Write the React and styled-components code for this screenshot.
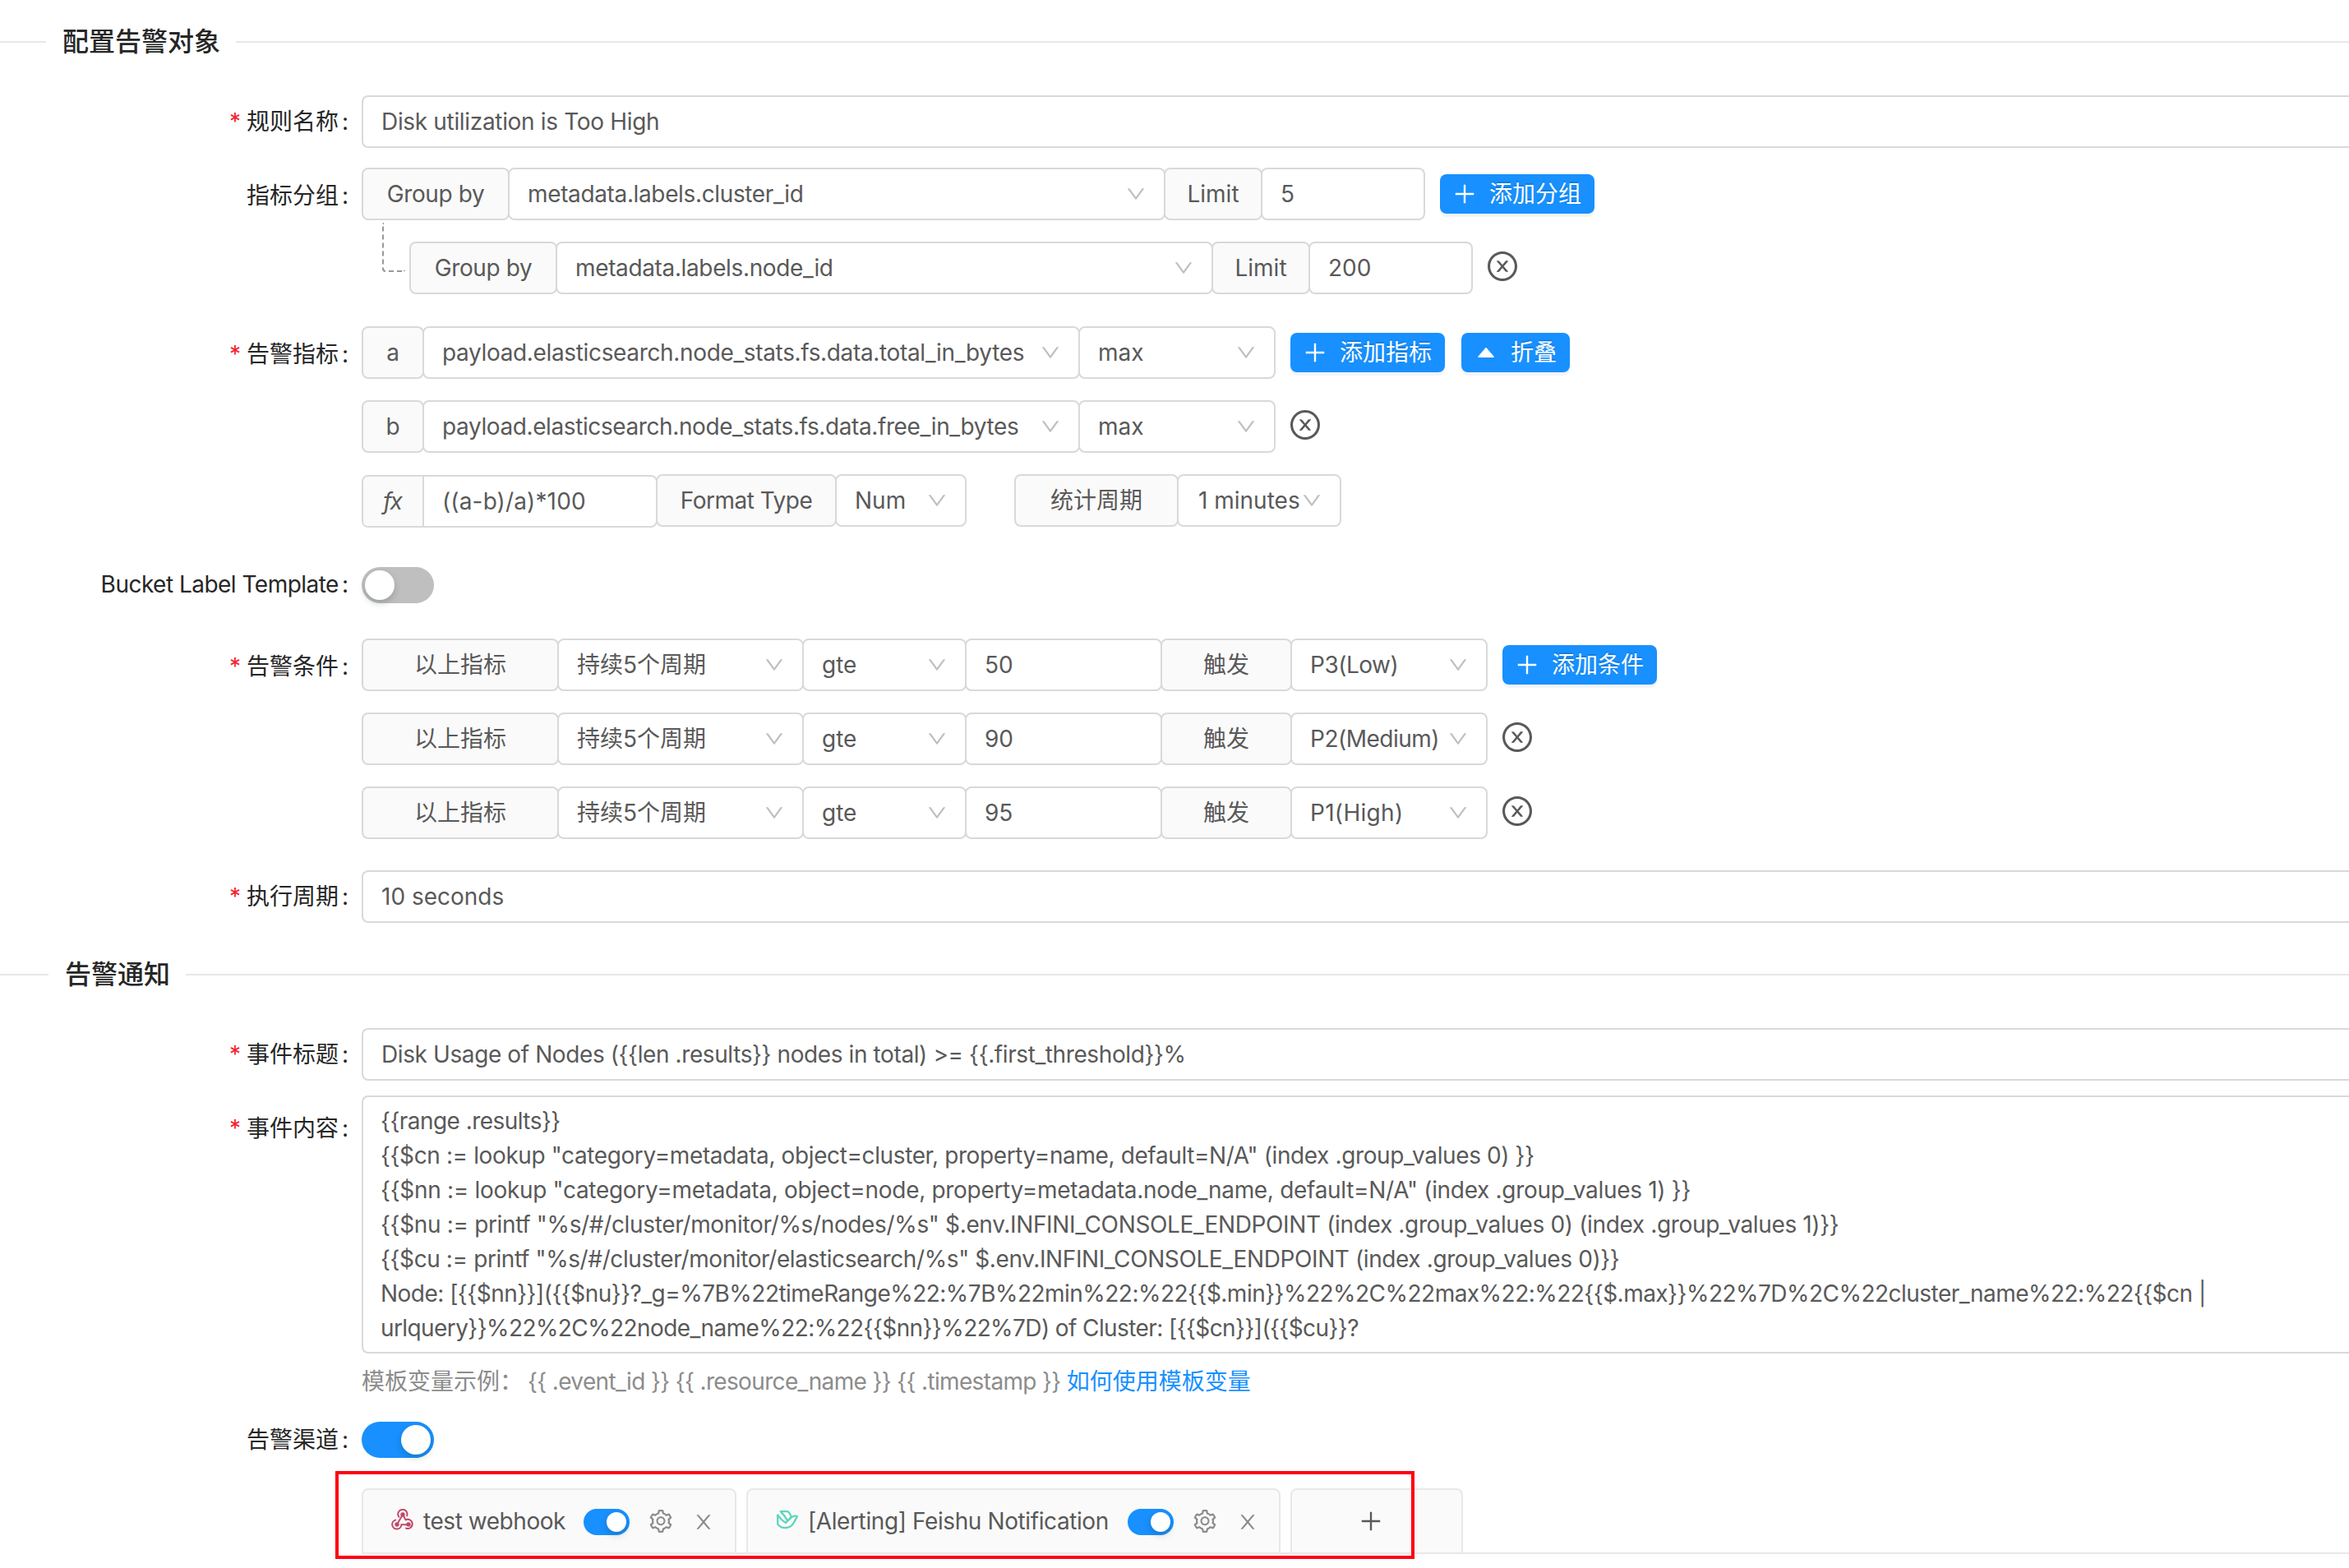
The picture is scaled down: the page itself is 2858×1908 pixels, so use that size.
import React from "react";
import styled, { createGlobalStyle, css } from "styled-components";
import { AiOutlineSetting } from "react-icons/ai";

const GlobalStyle = createGlobalStyle`
  *, *::before, *::after { box-sizing: border-box; }
  body { margin: 0; background: #fff; overflow: hidden; }
`;

const Page = styled.main`
  width: 2858px;
  height: 1908px;
  padding-top: 27px;
  overflow: hidden;
  background: #fff;
  color: #595959;
  font-family: Inter, "Noto Sans CJK SC", sans-serif;
  font-size: 28px;
  line-height: 42px;
  white-space: nowrap;
`;

const Heading = styled.h2`
  display: flex;
  align-items: center;
  height: 48px;
  margin: ${(p) => p.$mt || 0}px 0 0;
  color: #262626;
  font-size: 32px;
  font-weight: 500;
  line-height: 48px;

  &::before,
  &::after {
    content: "";
    height: 2px;
    background: #e8e8e8;
  }
  &::before { width: ${(p) => p.$lead}px; margin-right: 20px; }
  &::after { flex: 1; margin-left: 19px; }
`;

const FormItem = styled.section`
  display: grid;
  grid-template-columns: 440px 1fr;
  margin-top: ${(p) => p.$mt}px;
`;

const Label = styled.label`
  display: flex;
  justify-content: flex-end;
  align-items: center;
  height: ${(p) => p.$h || 64}px;
  margin-top: ${(p) => p.$shift || 0}px;
  padding-right: 16px;
  color: #262626;
  letter-spacing: ${(p) => p.$ls || 0}px;

  &::after { content: ":"; margin-left: 4px; letter-spacing: 0; }
`;

const Required = styled.span`
  margin-right: 7px;
  color: #f5222d;
`;

const Stack = styled.div`
  display: flex;
  flex-direction: column;
  gap: 26px;
`;

const Row = styled.div`
  display: flex;
  align-items: center;
  height: 64px;
  margin-left: ${(p) => p.$indent || 0}px;
  position: relative;
`;

const Branch = styled.span`
  position: absolute;
  left: -33px;
  top: -23px;
  width: 28px;
  height: 60px;
  border-left: 2px dashed #999;
  border-bottom: 2px dashed #999;
  border-bottom-left-radius: 4px;
`;

const cell = css`
  display: flex;
  align-items: center;
  width: ${(p) => p.$w}px;
  height: 64px;
  border: 2px solid #d9d9d9;
  border-radius: 8px;
  letter-spacing: ${(p) => p.$ls || 0}px;
`;

const Addon = styled.span`
  ${cell}
  flex: none;
  justify-content: center;
  background: #fafafa;
  margin-left: ${(p) => p.$ml || 0}px;
`;

const Input = styled.div`
  ${cell}
  flex: none;
  padding: 0 22px;
  background: #fff;
  margin-left: ${(p) => p.$ml || 0}px;
`;

const WideInput = styled.div`
  ${cell}
  width: auto;
  padding: 0 22px;
  border-right: 0;
  border-radius: 8px 0 0 8px;
`;

const SelectBox = styled(Input)`
  justify-content: space-between;
  padding-left: ${(p) => p.$pl || 22}px;
`;

const FormulaGroup = styled.div`
  display: flex;
  flex: none;
  width: 360px;
  height: 64px;
  margin-top: 2px;
  border: 2px solid #d9d9d9;
  border-radius: 8px;
  overflow: hidden;
  line-height: 60px;
`;

const FormulaMark = styled.i`
  width: 74px;
  padding-right: 2px;
  border-right: 2px solid #d9d9d9;
  background: #fafafa;
  text-align: center;
  letter-spacing: -2px;
`;

const FormulaText = styled.span`
  padding-left: 22px;
  letter-spacing: 0.15px;
`;

const Button = styled.button`
  display: flex;
  align-items: center;
  gap: 16px;
  flex: none;
  height: 48px;
  margin: 0 0 0 ${(p) => p.$ml || 18}px;
  padding: 0 16px;
  border: 0;
  border-radius: 8px;
  background: #1890ff;
  box-shadow: 0 4px 0 rgba(0, 0, 0, 0.045);
  color: #fff;
  font: inherit;
  text-shadow: 0 -2px 0 rgba(0, 0, 0, 0.12);
`;

const IconSvg = styled.svg`
  display: block;
  flex: none;
  width: ${(p) => p.$size}px;
  height: ${(p) => p.$size}px;
  fill: currentColor;
  color: ${(p) => p.$color || "inherit"};
`;

const RemoveButton = styled.span`
  margin: -4px 0 0 18px;
  color: #595959;
`;

const SwitchTrack = styled.span`
  display: flex;
  flex: none;
  align-items: center;
  justify-content: ${(p) => (p.$on ? "flex-end" : "flex-start")};
  width: ${(p) => (p.$small ? 56 : 88)}px;
  height: ${(p) => (p.$small ? 32 : 44)}px;
  padding: 4px;
  border-radius: 22px;
  background: ${(p) => (p.$on ? "#1890ff" : "#bfbfbf")};

  &::after {
    content: "";
    width: ${(p) => (p.$small ? 24 : 36)}px;
    height: ${(p) => (p.$small ? 24 : 36)}px;
    border-radius: 50%;
    background: #fff;
    box-shadow: 0 4px 8px rgba(0, 35, 11, 0.2);
  }
`;

const TextArea = styled.div`
  height: 314px;
  padding: 8px 22px 8px 21px;
  border: 2px solid #d9d9d9;
  border-right: 0;
  border-radius: 8px 0 0 8px;
`;

const Line = styled.div`
  height: 42px;
  letter-spacing: ${(p) => p.$ls || 0}px;
`;

const Hint = styled.div`
  display: flex;
  margin: 13px 0 0 440px;
  color: #8c8c8c;
`;

const HintSample = styled.span`
  margin-left: 6px;
  letter-spacing: -0.65px;
`;

const HintLink = styled.a`
  margin-left: 7px;
  color: #1890ff;
`;

const TabBar = styled.nav`
  position: relative;
  display: flex;
  gap: 12px;
  height: 80px;
  margin: 37px 0 0 440px;
  border-bottom: 2px solid #e8e8e8;
`;

const Tab = styled.div`
  display: flex;
  align-items: center;
  width: ${(p) => p.$w}px;
  height: 78px;
  padding: 0 0 0 ${(p) => p.$pl}px;
  border: 2px solid #e8e8e8;
  border-bottom: 0;
  border-radius: 8px 8px 0 0;
  background: #fafafa;
`;

const TabName = styled.span`
  width: ${(p) => p.$w}px;
  margin: 0 0 0 11px;
  letter-spacing: ${(p) => p.$ls || 0}px;
`;

const TabTools = styled.span`
  display: flex;
  align-items: center;
  gap: 24px;
  margin-top: 2px;
  color: #8c8c8c;
`;

const TabGear = styled(AiOutlineSetting)`
  margin: -2px 2px 0 0;
`;

const Highlight = styled.div`
  position: absolute;
  left: -32px;
  top: -21px;
  width: 1313px;
  height: 107px;
  border: 4px solid #ff0014;
`;

const ChannelIcon = styled.svg`
  flex: none;
  display: block;
  width: 28px;
  height: 26px;
  margin-top: -4px;
  fill: none;
`;

const Down = () => (
  <IconSvg $size={24} $color="#bfbfbf" viewBox="64 64 896 896">
    <path d="M884 256h-75c-5.1 0-9.9 2.5-12.9 6.6L512 654.2 227.9 262.6c-3-4.1-7.8-6.6-12.9-6.6h-75c-6.5 0-10.3 7.4-6.5 12.7l352.6 486.1c12.8 17.6 39 17.6 51.7 0l352.6-486.1c3.9-5.3.1-12.7-6.4-12.7z" />
  </IconSvg>
);

const Plus = () => (
  <IconSvg $size={28} viewBox="64 64 896 896">
    <path d="M482 152h60q8 0 8 8v704q0 8-8 8h-60q-8 0-8-8V160q0-8 8-8z" />
    <path d="M160 474h704q8 0 8 8v60q0 8-8 8H160q-8 0-8-8v-60q0-8 8-8z" />
  </IconSvg>
);

const CaretUp = () => (
  <IconSvg $size={28} viewBox="0 0 28 28">
    <path d="M13.2 8.5q.8-.9 1.6 0l8.8 10.2q.9 1.3-.7 1.3H5.1q-1.6 0-.7-1.3z" />
  </IconSvg>
);

const Close = () => (
  <IconSvg $size={24} viewBox="64 64 896 896">
    <path d="M563.8 512l262.5-312.9c4.4-5.2.7-13.1-6.1-13.1h-79.8c-4.7 0-9.2 2.1-12.3 5.7L511.6 449.8 295.1 191.7c-3-3.6-7.5-5.7-12.3-5.7H203c-6.8 0-10.5 7.9-6.1 13.1L459.4 512 196.9 824.9A7.95 7.95 0 0 0 203 838h79.8c4.7 0 9.2-2.1 12.3-5.7l216.5-258.1 216.5 258.1c3 3.6 7.5 5.7 12.3 5.7h79.8c6.8 0 10.5-7.9 6.1-13.1L563.8 512z" />
  </IconSvg>
);

const Remove = () => (
  <RemoveButton>
    <IconSvg $size={36} viewBox="64 64 896 896">
      <path d="M685.4 354.8c0-4.4-3.6-8-8-8l-66 .3L512 465.6l-99.3-118.4-66.1-.3c-4.4 0-8 3.5-8 8 0 1.9.7 3.7 1.9 5.2l130.1 155L340.5 670a8.32 8.32 0 0 0-1.9 5.2c0 4.4 3.6 8 8 8l66.1-.3L512 564.4l99.3 118.4 66 .3c4.4 0 8-3.5 8-8 0-1.9-.7-3.7-1.9-5.2L553.5 515l130.1-155c1.2-1.4 1.8-3.3 1.8-5.2z" />
      <path d="M512 65C264.6 65 64 265.6 64 513s200.6 448 448 448 448-200.6 448-448S759.4 65 512 65zm0 820c-205.4 0-372-166.6-372-372s166.6-372 372-372 372 166.6 372 372-166.6 372-372 372z" />
    </IconSvg>
  </RemoveButton>
);

const Webhook = () => (
  <ChannelIcon viewBox="0 0 28 26">
    <g stroke="#bf4a6b" strokeWidth="2" strokeLinecap="round">
      <path d="M9.2 9.6a5.6 5.6 0 1 1 9.9-1.2" />
      <path d="M14 7 L10.2 13.4 L7 19" />
      <path d="M14 7 L17.6 13.4 A5.6 5.6 0 1 1 18 23.6" />
      <path d="M5.2 13.6 A5.6 5.6 0 1 0 12.4 19.2 H21" />
    </g>
    <g fill="#bf4a6b">
      <circle cx="14" cy="7" r="2.7" />
      <circle cx="7" cy="19" r="2.7" />
      <circle cx="21" cy="19" r="2.7" />
    </g>
  </ChannelIcon>
);

const Feishu = () => (
  <ChannelIcon viewBox="0 0 28 26">
    <g stroke="#5fd6bb" strokeWidth="2.3" strokeLinejoin="round">
      <path d="M5.6 3.2H14.4C17 5.4 18.4 8 18.4 10.6L14 14.6C12 10.4 9 6.4 5.6 3.2Z" />
      <path d="M2.2 7.4V18.6C5 22.4 9 23.6 13 23C17.4 22.4 20.4 20 22 16.4L26 9.2C23 8 20.4 8.8 18.4 10.6L12 17C8.4 15 5 11.4 2.2 7.4Z" />
    </g>
  </ChannelIcon>
);

const Select = ({ w, ls, pl, ml = -2, children }) => (
  <SelectBox $w={w} $ls={ls} $pl={pl} $ml={ml}>
    {children}
    <Down />
  </SelectBox>
);

const groups = [
  { field: "metadata.labels.cluster_id", limit: "5" },
  { field: "metadata.labels.node_id", limit: "200", nested: true },
];

const metrics = [
  { name: "a", field: "payload.elasticsearch.node_stats.fs.data.total_in_bytes", tracking: -0.35 },
  { name: "b", field: "payload.elasticsearch.node_stats.fs.data.free_in_bytes", tracking: -0.4 },
];

const conditions = [
  { value: "50", level: "P3(Low)", tracking: -0.5 },
  { value: "90", level: "P2(Medium)", tracking: -0.5 },
  { value: "95", level: "P1(High)", tracking: 0.3 },
];

const message = [
  { tracking: -0.55, text: "{{range .results}}" },
  { tracking: -0.39, text: '{{$cn := lookup "category=metadata, object=cluster, property=name, default=N/A" (index .group_values 0) }}' },
  { tracking: -0.31, text: '{{$nn := lookup "category=metadata, object=node, property=metadata.node_name, default=N/A" (index .group_values 1) }}' },
  { tracking: -0.35, text: '{{$nu := printf "%s/#/cluster/monitor/%s/nodes/%s" $.env.INFINI_CONSOLE_ENDPOINT (index .group_values 0) (index .group_values 1)}}' },
  { tracking: -0.4, text: '{{$cu := printf "%s/#/cluster/monitor/elasticsearch/%s" $.env.INFINI_CONSOLE_ENDPOINT (index .group_values 0)}}' },
  { tracking: -0.52, text: "Node: [{{$nn}}]({{$nu}}?_g=%7B%22timeRange%22:%7B%22min%22:%22{{$.min}}%22%2C%22max%22:%22{{$.max}}%22%7D%2C%22cluster_name%22:%22{{$cn |" },
  { tracking: -0.59, text: "urlquery}}%22%2C%22node_name%22:%22{{$nn}}%22%7D) of Cluster: [{{$cn}}]({{$cu}}?" },
];

const ReqLabel = ({ shift, children }) => (
  <Label $shift={shift}>
    <Required>*</Required>
    {children}
  </Label>
);

const ChannelTools = () => (
  <TabTools>
    <SwitchTrack $on $small />
    <TabGear size={28} viewBox="64 64 896 896" />
    <Close />
  </TabTools>
);

export default function App() {
  return (
    <>
      <GlobalStyle />
      <Page>
        <Heading $lead={56}>配置告警对象</Heading>

        <FormItem $mt={41}>
          <ReqLabel>规则名称</ReqLabel>
          <WideInput $ls={-0.33}>Disk utilization is Too High</WideInput>
        </FormItem>

        <FormItem $mt={24}>
          <Label $shift={2}>指标分组</Label>
          <Stack>
            {groups.map((g) => (
              <Row key={g.field} $indent={g.nested ? 58 : 0}>
                {g.nested && <Branch />}
                <Addon $w={180} $ls={-0.4}>Group by</Addon>
                <Select w={800} ls={-0.36}>{g.field}</Select>
                <Addon $w={120} $ml={-2}>Limit</Addon>
                <Input $w={200} $ml={-2}>{g.limit}</Input>
                {g.nested ? <Remove /> : <Button><Plus />添加分组</Button>}
              </Row>
            ))}
          </Stack>
        </FormItem>

        <FormItem $mt={39}>
          <ReqLabel shift={2}>告警指标</ReqLabel>
          <Stack>
            {metrics.map((m, i) => (
              <Row key={m.name}>
                <Addon $w={76}>{m.name}</Addon>
                <Select w={800} ls={m.tracking}>{m.field}</Select>
                <Select w={240}>max</Select>
                {i === 0 ? (
                  <>
                    <Button><Plus />添加指标</Button>
                    <Button $ml={20}><CaretUp />折叠</Button>
                  </>
                ) : (
                  <Remove />
                )}
              </Row>
            ))}
            <Row>
              <FormulaGroup>
                <FormulaMark>fx</FormulaMark>
                <FormulaText>((a-b)/a)*100</FormulaText>
              </FormulaGroup>
              <Addon $w={220} $ml={-2} $ls={-0.5}>Format Type</Addon>
              <Select w={160}>Num</Select>
              <Addon $w={200} $ml={58}>统计周期</Addon>
              <Select w={200} pl={24}>1 minutes</Select>
            </Row>
          </Stack>
        </FormItem>

        <FormItem $mt={49}>
          <Label $h={44} $shift={-1} $ls={-0.52}>Bucket Label Template</Label>
          <SwitchTrack />
        </FormItem>

        <FormItem $mt={43}>
          <ReqLabel shift={2}>告警条件</ReqLabel>
          <Stack>
            {conditions.map((c, i) => (
              <Row key={c.value}>
                <Addon $w={240}>以上指标</Addon>
                <Select w={300}>持续5个周期</Select>
                <Select w={200}>gte</Select>
                <Input $w={240} $ml={-2}>{c.value}</Input>
                <Addon $w={160} $ml={-2}>触发</Addon>
                <Select w={240} ls={c.tracking}>{c.level}</Select>
                {i === 0 ? <Button><Plus />添加条件</Button> : <Remove />}
              </Row>
            ))}
          </Stack>
        </FormItem>

        <FormItem $mt={38}>
          <ReqLabel>执行周期</ReqLabel>
          <WideInput>10 seconds</WideInput>
        </FormItem>

        <Heading $mt={39} $lead={59}>告警通知</Heading>

        <FormItem $mt={41}>
          <ReqLabel>事件标题</ReqLabel>
          <WideInput $ls={-0.4}>{"Disk Usage of Nodes ({{len .results}} nodes in total) >= {{.first_threshold}}%"}</WideInput>
        </FormItem>

        <FormItem $mt={18}>
          <ReqLabel shift={8}>事件内容</ReqLabel>
          <TextArea>
            {message.map((m) => (
              <Line key={m.text} $ls={m.tracking}>{m.text}</Line>
            ))}
          </TextArea>
        </FormItem>

        <Hint>
          模板变量示例：
          <HintSample>{"{{ .event_id }} {{ .resource_name }} {{ .timestamp }}"}</HintSample>
          <HintLink>如何使用模板变量</HintLink>
        </Hint>

        <FormItem $mt={28}>
          <Label $h={44}>告警渠道</Label>
          <SwitchTrack $on />
        </FormItem>

        <TabBar>
          <Tab $w={456} $pl={34}>
            <Webhook />
            <TabName $w={195} $ls={-0.45}>test webhook</TabName>
            <ChannelTools />
          </Tab>
          <Tab $w={650} $pl={34}>
            <Feishu />
            <TabName $w={389} $ls={-0.4}>[Alerting] Feishu Notification</TabName>
            <ChannelTools />
          </Tab>
          <Tab $w={210} $pl={82}>
            <Plus />
          </Tab>
          <Highlight />
        </TabBar>
      </Page>
    </>
  );
}
